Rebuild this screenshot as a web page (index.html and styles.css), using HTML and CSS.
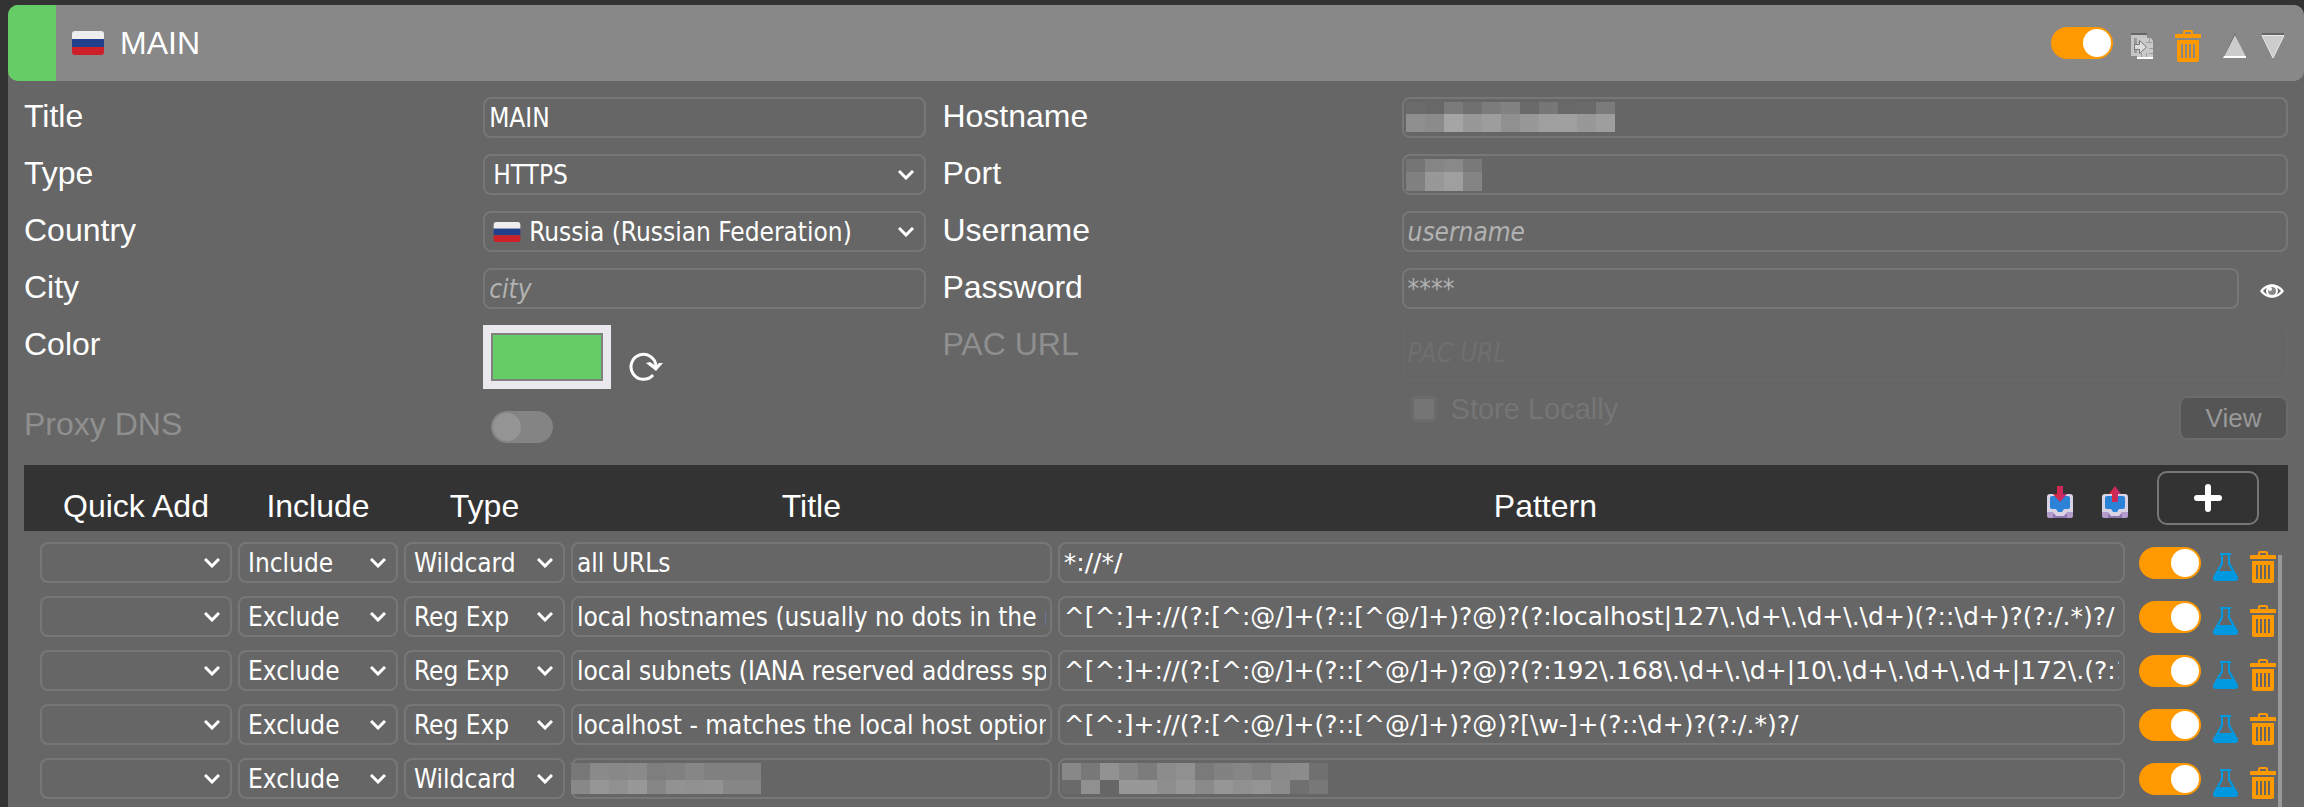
FILE: index.html
```html
<!DOCTYPE html>
<html lang="en">
<head>
<meta charset="UTF-8">
<title>Proxies</title>
<link rel="stylesheet" href="styles.css">
</head>
<body>

<svg class="defs" aria-hidden="true">
  <symbol id="flag" viewBox="0 0 32 24">
    <path fill="#eee" d="M0 8V3a3 3 0 0 1 3-3h26a3 3 0 0 1 3 3v5z"/>
    <path fill="#22408c" d="M0 8h32v8H0z"/>
    <path fill="#ce2028" d="M0 16h32v5a3 3 0 0 1-3 3H3a3 3 0 0 1-3-3z"/>
  </symbol>
  <symbol id="trash" viewBox="0 0 26 32">
    <path fill="#f90" fill-rule="evenodd" d="M8 4V2a2 2 0 0 1 2-2h6a2 2 0 0 1 2 2v2h7a1 1 0 0 1 1 1v3H0V5a1 1 0 0 1 1-1zM10 2v2h6V2zM2 10h22v20a2 2 0 0 1-2 2H4a2 2 0 0 1-2-2zM6 14v14h2V14zM10 14v14h2V14zM14 14v14h2V14zM18 14v14h2V14z"/>
  </symbol>
  <symbol id="flask" viewBox="0 0 25 28">
    <path fill="#0099e0" fill-rule="evenodd" d="M7 0h11v2h-1v8l8 14c.5 2-.5 4-2.500 4H2.500C.5 28-.5 26 0 24l8-14V2H7zM10 2v9l-4 7h13l-4-7V2z"/>
  </symbol>
  <symbol id="tray" viewBox="0 0 26 32">
    <path fill="#b39ccb" d="M0 22h26v8a2 2 0 0 1-2 2H2a2 2 0 0 1-2-2z"/>
    <path fill="#9076b0" d="M6 28h14v4H6z"/>
    <path fill="#d9d3e4" d="M3 8h20a3 3 0 0 1 3 3v15h-6l-3 4H9l-3-4H0V11a3 3 0 0 1 3-3z"/>
    <path fill="#2b83d8" d="M5 10h16a2 2 0 0 1 2 2v9a2 2 0 0 1-2 2h-4l-2 3h-4l-2-3H5a2 2 0 0 1-2-2v-9a2 2 0 0 1 2-2z"/>
  </symbol>
  <linearGradient id="arrow-fill">
    <stop offset="0" stop-color="#e0252f"/>
    <stop offset="1" stop-color="#bb2c80"/>
  </linearGradient>
</svg>

<section class="proxy">
  <header class="summary">
    <span class="color-tag"></span>
    <svg class="flag"><use href="#flag"/></svg>
    <h1>MAIN</h1>
    <input type="checkbox" class="toggle" aria-label="Active" checked>
    <button class="icon" aria-label="Duplicate">
      <svg width="22" height="26" viewBox="0 0 22 26">
        <path fill="#666" d="M0 0h16v3H0z"/>
        <path fill="#c4c4c4" d="M0 2h16v21H0z"/>
        <path fill="#999" d="M3 5h10v15H3z"/>
        <path fill="#c9c9c9" d="M6 5h14l2 3v18H6z"/>
        <path stroke="#9d9d9d" d="M7 9.500h3M15 9.500h6M18.500 5v5M10.500 20v5M15.500 20v5M18 15.500h4M18 20.500h4"/>
        <path fill="#ddd" stroke="#777" d="M3.500 11.500h5v-4l7 6.500-7 6.500v-4h-5z"/>
        <path fill="#fff" d="M6 24h16v2H6z"/>
      </svg>
    </button>
    <button class="icon" aria-label="Delete"><svg class="trash"><use href="#trash"/></svg></button>
    <button class="icon" aria-label="Move up">
      <svg width="24" height="26"><path fill="#666" d="M12 0L1 23l11-20 9 20z"/><path fill="#ccc" d="M12 2L23 24H1z"/><path fill="#fff" d="M1 23h22v2H0z"/></svg>
    </button>
    <button class="icon" aria-label="Move down">
      <svg width="24" height="26"><path fill="#666" d="M1 0h22v2H1z"/><path fill="#ccc" stroke="#e8e8e8" d="M1 2.500h22L12 25z"/></svg>
    </button>
  </header>

  <div class="details">
    <label for="title">Title</label>
    <input type="text" id="title" class="field" value="MAIN">
    <label for="hostname">Hostname</label>
    <div class="masked">
      <input type="text" id="hostname" class="field">
      <svg class="mosaic" data-heights="12 18" data-cells="6b 68 7b 70 7c 82 6a 77 68 6a 7b / 8f 8b a5 98 9d 90 98 9f 9f 98 9e"></svg>
    </div>

    <label for="type">Type</label>
    <select id="type" class="field"><option>HTTPS</option></select>
    <label for="port">Port</label>
    <div class="masked">
      <input type="text" id="port" class="field">
      <svg class="mosaic" data-heights="13 19" data-cells="75 85 89 79 / 80 98 9f 84"></svg>
    </div>

    <label for="country">Country</label>
    <div class="country">
      <select id="country" class="field"><option>Russia (Russian Federation)</option></select>
      <svg class="small-flag"><use href="#flag"/></svg>
    </div>
    <label for="username">Username</label>
    <input type="text" id="username" class="field" placeholder="username">

    <label for="city">City</label>
    <input type="text" id="city" class="field" placeholder="city">
    <label for="password">Password</label>
    <div class="password">
      <input type="password" id="password" class="field" placeholder="****">
      <button class="icon" aria-label="Show password">
        <svg width="24" height="14" viewBox="0 0 24 14">
          <path fill="#fff" d="M0 7C6-2 18-2 24 7 18 16 6 16 0 7z"/>
          <path fill="#666" d="M3 7c5-6 13-6 18 0-5 6-13 6-18 0z"/>
          <circle cx="12" cy="7" r="5" fill="#888" stroke="#fff" stroke-width="2"/>
          <circle cx="10" cy="5" r="2" fill="#fff"/>
        </svg>
      </button>
    </div>

    <label for="color">Color</label>
    <div class="color">
      <input type="color" id="color" value="#66cc66">
      <button class="icon" aria-label="Random color">
        <svg width="36" height="30" viewBox="0 0 36 30">
          <path fill="none" stroke="#fff" stroke-width="3" d="M25 24A12.500 12.500 0 1 1 28 15v2"/>
          <path fill="#fff" d="M18 12l4-1 6 4 3-3 4 0-7 8z"/>
        </svg>
      </button>
    </div>
    <label for="pac" class="off">PAC URL</label>
    <div class="pac">
      <input type="text" id="pac" class="field" placeholder="PAC URL" disabled>
      <div class="pac-row">
        <input type="checkbox" id="store" disabled>
        <label for="store">Store Locally</label>
        <button class="view" disabled>View</button>
      </div>
    </div>

    <label for="dns" class="off">Proxy DNS</label>
    <div class="dns"><input type="checkbox" id="dns" class="toggle" disabled></div>
  </div>

  <div class="pattern-head pattern-grid">
    <span>Quick Add</span>
    <span>Include</span>
    <span>Type</span>
    <span>Title</span>
    <span class="pattern-label">Pattern</span>
    <div class="head-actions">
      <button class="icon" aria-label="Import">
        <svg width="26" height="32"><use href="#tray"/><path fill="url(#arrow-fill)" d="M10 0h6v8h4l-7 8-7-8h4z"/></svg>
      </button>
      <button class="icon" aria-label="Export">
        <svg width="26" height="32"><use href="#tray"/><path fill="url(#arrow-fill)" d="M13 0l6 8h-3v8h-6V8H7z"/></svg>
      </button>
      <button class="add" aria-label="Add">
        <svg width="30" height="30"><path stroke="#fff" stroke-width="6" stroke-linecap="round" d="M15 4v22M4 15h22"/></svg>
      </button>
    </div>
  </div>

  <div class="pattern-box">
    <div class="pattern-list">
      <div class="pattern-grid">
        <select class="field" aria-label="Quick Add"><option></option></select>
        <select class="field" aria-label="Include"><option>Include</option></select>
        <select class="field" aria-label="Type"><option>Wildcard</option></select>
        <input type="text" class="field" aria-label="Title" value="all URLs">
        <input type="text" class="field pattern" aria-label="Pattern" value="*://*/">
        <div class="actions">
          <input type="checkbox" class="toggle" aria-label="Active" checked>
          <button class="icon" aria-label="Test"><svg class="flask"><use href="#flask"/></svg></button>
          <button class="icon" aria-label="Delete"><svg class="trash"><use href="#trash"/></svg></button>
        </div>
      </div>
      <div class="pattern-grid">
        <select class="field" aria-label="Quick Add"><option></option></select>
        <select class="field" aria-label="Include"><option>Exclude</option></select>
        <select class="field" aria-label="Type"><option>Reg Exp</option></select>
        <input type="text" class="field" aria-label="Title" value="local hostnames (usually no dots in the name)">
        <input type="text" class="field pattern" aria-label="Pattern" value="^[^:]+://(?:[^:@/]+(?::[^@/]+)?@)?(?:localhost|127\.\d+\.\d+\.\d+)(?::\d+)?(?:/.*)?/">
        <div class="actions">
          <input type="checkbox" class="toggle" aria-label="Active" checked>
          <button class="icon" aria-label="Test"><svg class="flask"><use href="#flask"/></svg></button>
          <button class="icon" aria-label="Delete"><svg class="trash"><use href="#trash"/></svg></button>
        </div>
      </div>
      <div class="pattern-grid">
        <select class="field" aria-label="Quick Add"><option></option></select>
        <select class="field" aria-label="Include"><option>Exclude</option></select>
        <select class="field" aria-label="Type"><option>Reg Exp</option></select>
        <input type="text" class="field" aria-label="Title" value="local subnets (IANA reserved address space)">
        <input type="text" class="field pattern" aria-label="Pattern" value="^[^:]+://(?:[^:@/]+(?::[^@/]+)?@)?(?:192\.168\.\d+\.\d+|10\.\d+\.\d+\.\d+|172\.(?:1[6789]|2[0-9]|3[01])\.\d+\.\d+)(?::\d+)?(?:/.*)?/">
        <div class="actions">
          <input type="checkbox" class="toggle" aria-label="Active" checked>
          <button class="icon" aria-label="Test"><svg class="flask"><use href="#flask"/></svg></button>
          <button class="icon" aria-label="Delete"><svg class="trash"><use href="#trash"/></svg></button>
        </div>
      </div>
      <div class="pattern-grid">
        <select class="field" aria-label="Quick Add"><option></option></select>
        <select class="field" aria-label="Include"><option>Exclude</option></select>
        <select class="field" aria-label="Type"><option>Reg Exp</option></select>
        <input type="text" class="field" aria-label="Title" value="localhost - matches the local host optionally">
        <input type="text" class="field pattern" aria-label="Pattern" value="^[^:]+://(?:[^:@/]+(?::[^@/]+)?@)?[\w-]+(?::\d+)?(?:/.*)?/">
        <div class="actions">
          <input type="checkbox" class="toggle" aria-label="Active" checked>
          <button class="icon" aria-label="Test"><svg class="flask"><use href="#flask"/></svg></button>
          <button class="icon" aria-label="Delete"><svg class="trash"><use href="#trash"/></svg></button>
        </div>
      </div>
      <div class="pattern-grid">
        <select class="field" aria-label="Quick Add"><option></option></select>
        <select class="field" aria-label="Include"><option>Exclude</option></select>
        <select class="field" aria-label="Type"><option>Wildcard</option></select>
        <div class="masked">
          <input type="text" class="field" aria-label="Title">
          <svg class="mosaic edge" data-heights="17 14" data-cells="78 8a 88 8a 7e 80 86 80 80 80 / 88 96 90 98 86 92 90 92 86 86"></svg>
        </div>
        <div class="masked">
          <input type="text" class="field pattern" aria-label="Pattern">
          <svg class="mosaic" data-heights="17 14" data-cells="88 78 92 86 7c 8c 90 7a 82 86 80 8a 8c 70 / 6a 90 66 98 98 8e 96 8a 96 90 94 8c 70 78"></svg>
        </div>
        <div class="actions">
          <input type="checkbox" class="toggle" aria-label="Active" checked>
          <button class="icon" aria-label="Test"><svg class="flask"><use href="#flask"/></svg></button>
          <button class="icon" aria-label="Delete"><svg class="trash"><use href="#trash"/></svg></button>
        </div>
      </div>
    </div>
    <div class="scroll-thumb"></div>
  </div>
</section>

<script src="script.js"></script>
</body>
</html>
```
FILE: styles.css
```css
*{box-sizing:border-box}
html,body{margin:0;height:100%}
body{background:#333;color:#fff;font:32px/38px "Liberation Sans",Arial,sans-serif;padding:5px 0 0 8px;overflow:hidden}
button,input,select{font:inherit;color:inherit;margin:0}
svg{display:block;flex:none}
.defs{position:absolute;width:0;height:0}

.proxy{display:flex;flex-direction:column;height:100%;background:#666;border-radius:10px 10px 0 0}

.summary{display:flex;align-items:center;height:76px;flex:none;padding-right:19px;background:#888;border-radius:10px;overflow:hidden}
.summary h1{flex:1;margin:0;font-size:32px;font-weight:400}
.summary .icon{margin-left:22px;padding-top:6px}
.summary .icon:nth-of-type(1){margin-left:18px}
.summary .icon:nth-of-type(4){margin-left:14px}
.color-tag{align-self:stretch;width:48px;background:#6c6}
.flag{width:32px;height:24px;margin:0 16px}

.icon{display:block;flex:none;padding:0;border:0;background:none}
.trash{width:26px;height:32px}
.flask{width:25px;height:28px}

.toggle{appearance:none;flex:none;width:62px;height:32px;padding:2px;border-radius:16px;background:#848484}
.toggle::before{content:"";display:block;width:28px;height:28px;border-radius:50%;background:#fff}
.toggle:checked{background:#f90}
.toggle:checked::before{margin-left:auto}
.toggle:disabled::before{background:#949494}

.field{appearance:none;display:block;width:100%;min-width:0;height:41px;padding:0 4px;border:2px solid #777;border-radius:8px;background:none;font:26px/36px "DejaVu Sans Condensed","DejaVu Sans",sans-serif;outline:0}
.field.pattern{font-family:"DejaVu Sans",sans-serif;font-size:25px}
.field::placeholder{color:#b2b2b2;font-style:italic}
select.field{padding:0 8px;background:url('data:image/svg+xml,<svg xmlns="http://www.w3.org/2000/svg" width="16" height="10"><path d="M1 1l7 7 7-7" fill="none" stroke="white" stroke-width="3"/></svg>') no-repeat right 10px center}

.details{display:grid;grid-template-columns:1fr 1fr 1fr 2fr;gap:16px;padding:16px}
.off{color:#8f8f8f}
.masked,.country{position:relative}
.mosaic{position:absolute;left:4px;top:5px}
.mosaic.edge{left:0}
.small-flag{position:absolute;left:10px;top:11px;width:28px;height:20px}
.country .field{padding-left:44px}
.password{display:flex;gap:21px;padding-right:4px}
.password .icon{padding-top:4px}
.color{display:flex;align-items:flex-end;gap:17px}
.color input{appearance:none;width:128px;height:64px;padding:8px;border:0;background:#e9e9ed}
.color input::-webkit-color-swatch-wrapper{padding:0}
.color input::-webkit-color-swatch{border:2px solid #808080;border-radius:0}
.color .icon{padding-bottom:8px}
.dns{height:44px;padding:6px 8px}
.pac{grid-row:span 2}
.pac .field{height:56px;border-color:#686868}
.pac .field::placeholder{color:#6f6f6f}
.pac-row{display:flex;align-items:flex-start;padding-top:15px;font-size:29px;line-height:26px;color:#757575}
.pac-row input{appearance:none;width:26px;height:26px;margin:0 14px 0 9px;border:3px solid #6b6b6b;border-radius:4px;background:#757575}
.view{width:109px;height:44px;margin-left:auto;border:2px solid #6b6b6b;border-radius:8px;background:#555;color:#999;font-size:26px}

.pattern-grid{display:grid;grid-template-columns:192px 160px 161px 21.5% 1fr 145px;gap:6px}
.pattern-head{flex:none;height:66px;margin:0 16px;padding:0 12px 0 16px;background:#333;text-align:center}
.pattern-head span{align-self:end;padding-bottom:6px}
.pattern-head .pattern-label{padding-right:92px}
.head-actions{display:flex;align-items:center;justify-content:flex-end;gap:29px;padding-right:17px}
.head-actions .icon{padding-top:8px}
.add{display:flex;align-items:center;justify-content:center;flex:none;width:102px;height:54px;border:2px solid #777;border-radius:10px;background:none}

.pattern-box{display:flex;flex:1;min-height:0;margin:0 16px;padding:11px 6px 0 16px}
.pattern-list{display:flex;flex-direction:column;gap:13px;flex:1;min-width:0;overflow:hidden}
.actions{display:flex;align-items:center;gap:12px;height:41px;padding-left:8px}
.actions .icon{padding-top:8px}
.scroll-thumb{flex:none;width:4px;margin:13px 0 0 2px;background:#999}
```
FILE: script.js
```js
// each hidden value is two rows of grey cells, 19px wide
document.querySelectorAll('.mosaic').forEach(svg => {
  const heights = svg.dataset.heights.split(' ').map(Number);
  const rows = svg.dataset.cells.split(' / ').map(r => r.split(' '));
  svg.setAttribute('width', rows[0].length * 19);
  svg.setAttribute('height', heights[0] + heights[1]);
  let y = 0;
  rows.forEach((row, i) => {
    row.forEach((c, x) => {
      const rect = document.createElementNS('http://www.w3.org/2000/svg', 'rect');
      rect.setAttribute('x', x * 19);
      rect.setAttribute('y', y);
      rect.setAttribute('width', 19);
      rect.setAttribute('height', heights[i]);
      rect.setAttribute('fill', '#' + c + c + c);
      svg.append(rect);
    });
    y += heights[i];
  });
});
```
